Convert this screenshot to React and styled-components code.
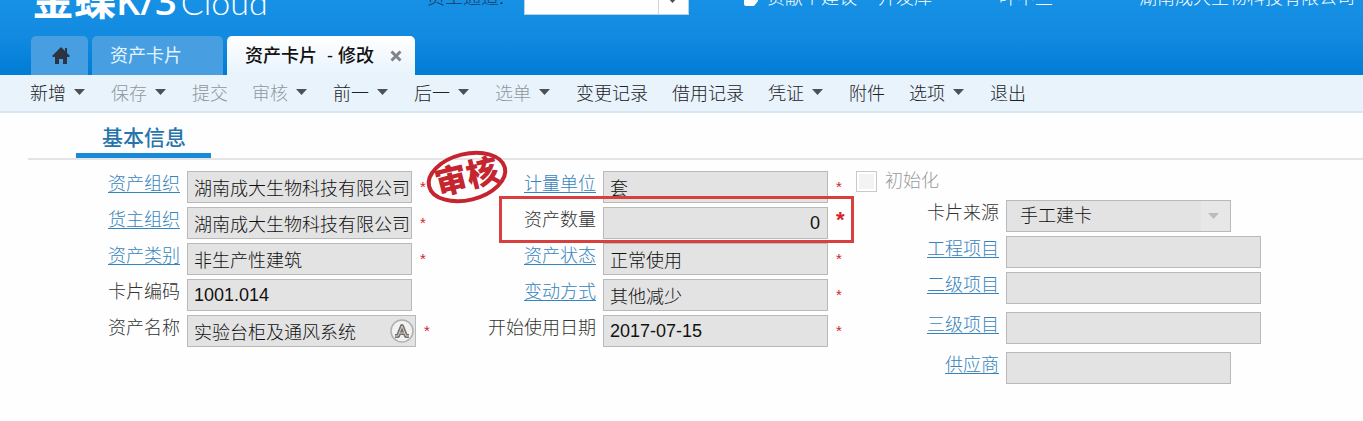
import React from 'react';
import styled, { createGlobalStyle, css } from 'styled-components';

const toolbarItems = [
    { text: '新增', menu: true },
    { text: '保存', menu: true, muted: true },
    { text: '提交', muted: true },
    { text: '审核', menu: true, muted: true },
    { text: '前一', menu: true },
    { text: '后一', menu: true },
    { text: '选单', menu: true, muted: true },
    { text: '变更记录' },
    { text: '借用记录' },
    { text: '凭证', menu: true },
    { text: '附件' },
    { text: '选项', menu: true },
    { text: '退出' },
];

const assetFields = [
    { id: 'assetOrg', label: '资产组织', value: '湖南成大生物科技有限公司', link: true, required: true },
    { id: 'ownerOrg', label: '货主组织', value: '湖南成大生物科技有限公司', link: true, required: true },
    { id: 'category', label: '资产类别', value: '非生产性建筑', link: true, required: true },
    { id: 'cardCode', label: '卡片编码', value: '1001.014' },
    { id: 'assetName', label: '资产名称', value: '实验台柜及通风系统', required: true, multilang: true },
];

const stateFields = [
    { id: 'unit', label: '计量单位', value: '套', link: true, required: true },
    { id: 'quantity', label: '资产数量', value: '0', required: true, marked: true },
    { id: 'status', label: '资产状态', value: '正常使用', link: true, required: true },
    { id: 'changeMode', label: '变动方式', value: '其他减少', link: true, required: true },
    { id: 'startDate', label: '开始使用日期', value: '2017-07-15', required: true },
];

const projectFields = [
    { id: 'project1', label: '工程项目', value: '', link: true, size: 'large' },
    { id: 'project2', label: '二级项目', value: '', link: true, size: 'large', loose: true },
    { id: 'project3', label: '三级项目', value: '', link: true, size: 'large', loose: true },
    { id: 'supplier', label: '供应商', value: '', link: true },
];

const Caret = ({ color = '#4c5157' }) => (
    <svg width="13" height="8" viewBox="0 0 13 8" aria-hidden="true">
        <path d="M0 1h11L5.500 7z" fill={color} />
    </svg>
);

const Field = ({ field, wide }) => (
    <FieldRow $marked={field.marked} $loose={field.loose}>
        <FieldLabel htmlFor={field.id} $wide={wide}>
            {field.link ? <FieldLink href={`#${field.id}`}>{field.label}</FieldLink> : field.label}
        </FieldLabel>
        <InputWrapper $size={field.multilang ? 'medium' : field.size}>
            <TextInput id={field.id} defaultValue={field.value} readOnly $number={field.marked} />
            {field.multilang &&
                <LangButton type="button" aria-label="多语言">
                    <svg width="24" height="24" viewBox="0 0 24 24">
                        <circle cx="12" cy="12" r="11" fill="#f1f1f1" stroke="#aeb0b2" strokeWidth="1.5" />
                        <path
                            d="M5 17h3L12 7l4 10h3M9 14h6"
                            fill="none" stroke="#77716d" strokeWidth="4" strokeLinejoin="round"
                        />
                        <path d="M5 17h3L12 7l4 10h3M9 14h6" fill="none" stroke="#d5d0cc" strokeWidth="1" />
                    </svg>
                </LangButton>
            }
        </InputWrapper>
        {field.required && <Required $marked={field.marked}>*</Required>}
    </FieldRow>
);

const App = () => (
    <Page>
        <GlobalStyle />
        <Header>
            <TopBar>
                <Logo>
                    <LogoName>金蝶</LogoName>
                    <LogoProduct>K/3</LogoProduct>
                    <LogoCloud>Cloud</LogoCloud>
                </Logo>
                <Channel>
                    <label htmlFor="channel">员工通道:</label>
                    <ChannelBox>
                        <ChannelSelect id="channel" />
                        <ChannelArrow><Caret /></ChannelArrow>
                    </ChannelBox>
                </Channel>
                <Account>
                    <svg width="18" height="18" viewBox="0 0 18 18" aria-hidden="true">
                        <path d="M2 0h14v9l-4 5H4q-2 0-2-2z" fill="#fff" />
                    </svg>
                    <AccountText $width={111}>贡献个建议</AccountText>
                    <AccountText $width={121}>开发库</AccountText>
                    <AccountText $width={140}>叶中兰</AccountText>
                    <AccountText>湖南成大生物科技有限公司</AccountText>
                </Account>
            </TopBar>
            <Tabs>
                <HomeTab type="button" aria-label="首页">
                    <svg width="18" height="17" viewBox="0 0 18 17">
                        <path d="M9 0L0 9l1 1h2v7h4v-5h4v5h4v-7h2l1-1-3-3V1h-2v3z" fill="#2b3440" />
                    </svg>
                </HomeTab>
                <Tab type="button">资产卡片</Tab>
                <ActiveTab>
                    <span>资产卡片&nbsp; - 修改</span>
                    <CloseButton type="button" aria-label="关闭">
                        <svg width="12" height="15" viewBox="0 0 12 15">
                            <path d="M1.500 4.500l9 9M10.500 4.500l-9 9" stroke="#7e8488" strokeWidth="3" />
                        </svg>
                    </CloseButton>
                </ActiveTab>
            </Tabs>
        </Header>
        <Toolbar>
            {toolbarItems.map(item => (
                <ToolButton key={item.text} type="button" $muted={item.muted}>
                    {item.text}
                    {item.menu && <Caret />}
                </ToolButton>
            ))}
        </Toolbar>
        <SectionBar>
            <SectionTitle>基本信息</SectionTitle>
        </SectionBar>
        <Form>
            <Column>
                {assetFields.map(field => <Field key={field.id} field={field} />)}
                <Stamp width="86" height="60" viewBox="0 0 86 60">
                    <g transform="rotate(-14 43 30)">
                        <ellipse cx="43" cy="30" rx="39" ry="23" fill="none" stroke="#c5252f" strokeWidth="4" />
                        <text x="43" y="41" textAnchor="middle">审核</text>
                    </g>
                </Stamp>
            </Column>
            <Column>
                {stateFields.map(field => <Field key={field.id} field={field} />)}
            </Column>
            <Column>
                <CheckLabel>
                    <CheckBox type="checkbox" disabled />
                    初始化
                </CheckLabel>
                <FieldRow>
                    <FieldLabel htmlFor="source" $wide>卡片来源</FieldLabel>
                    <InputWrapper>
                        <SourceSelect id="source" defaultValue="手工建卡">
                            <option>手工建卡</option>
                        </SourceSelect>
                        <SourceArrow><Caret color="#bcbcbc" /></SourceArrow>
                    </InputWrapper>
                </FieldRow>
                {projectFields.map(field => <Field key={field.id} field={field} wide />)}
            </Column>
        </Form>
    </Page>
);

export default App;

const GlobalStyle = createGlobalStyle`
    *, *::after {
        box-sizing: border-box;
    }

    body {
        margin: 0;
        background: #fefefe;
    }

    body, button, input, select {
        font-family: "Liberation Sans", "Noto Sans CJK SC", sans-serif;
        font-size: 18px;
        font-weight: 300;
    }

    button {
        border: 0;
        padding: 0;
        background: none;
        cursor: pointer;
    }

    svg {
        display: block;
        flex: none;
    }
`;

const Page = styled.div`
    color: #222;
    white-space: nowrap;
`;

const Header = styled.header`
    background: linear-gradient(#1791e5, #118ae0 50%, #007cd5);
`;

/* scrolled up: only the lower edge of this bar is on screen */
const TopBar = styled.div`
    display: flex;
    align-items: flex-end;
    height: 20px;
    padding-left: 32px;
    overflow: hidden;
`;

const Logo = styled.div`
    display: flex;
    align-items: baseline;
    width: 395px;
    color: #fff;
    line-height: 36px;
`;

const LogoName = styled.span`
    font-size: 42px;
    font-weight: 700;
`;

const LogoProduct = styled.span`
    font-family: "Open Sans", sans-serif;
    font-size: 38px;
    font-weight: 600;
`;

const LogoCloud = styled.span`
    margin-left: 4px;
    font-family: Lato, sans-serif;
    font-size: 34px;
    font-weight: 300;
`;

const Channel = styled.div`
    display: flex;
    align-items: flex-end;
    width: 315px;
    color: #173a5c;

    label {
        width: 97px;
        padding-bottom: 10px;
        line-height: 24px;
    }
`;

const ChannelBox = styled.div`
    position: relative;
    margin-bottom: 5px;
`;

const ChannelSelect = styled.select`
    display: block;
    width: 165px;
    height: 30px;
    border: 1px solid #b7d3e8;
    border-radius: 0;
    background: #fff;
    appearance: none;
`;

const ChannelArrow = styled.span`
    position: absolute;
    right: 1px;
    bottom: 1px;
    display: flex;
    align-items: center;
    justify-content: center;
    width: 30px;
    height: 28px;
    border-left: 1px solid #d5d5d5;
    pointer-events: none;
`;

const Account = styled.div`
    display: flex;
    align-items: flex-end;
    padding-bottom: 10px;
    color: #fff;
    line-height: 24px;

    svg {
        margin-right: 7px;
    }
`;

const AccountText = styled.span`
    flex: none;
    width: ${({ $width }) => ($width ? `${$width}px` : 'auto')};
`;

const Tabs = styled.nav`
    display: flex;
    gap: 4px;
    padding: 16px 31px 0;
`;

const tabBox = css`
    display: flex;
    align-items: center;
    height: 39px;
    border-radius: 5px 5px 0 0;
`;

const HomeTab = styled.button`
    ${tabBox}
    justify-content: center;
    width: 57px;
    padding-left: 3px;
    background: #479fe2;
`;

const Tab = styled.button`
    ${tabBox}
    width: 131px;
    padding: 0 0 3px 18px;
    background: #479fe2;
    color: #e4f4ff;
    font-weight: 400;
`;

const ActiveTab = styled.div`
    ${tabBox}
    justify-content: space-between;
    width: 188px;
    padding: 0 13px 3px 18px;
    background: linear-gradient(#fff, #e8f3fc);
    color: #111;
    font-weight: 500;
`;

const CloseButton = styled.button`
    display: flex;
`;

const Toolbar = styled.div`
    display: flex;
    align-items: center;
    gap: 24px;
    height: 38px;
    padding: 0 0 2px 30px;
    border-bottom: 2px solid #d8e6f1;
    background: #e8f3fc;
`;

const ToolButton = styled.button`
    display: flex;
    align-items: center;
    gap: 8px;
    color: ${({ $muted }) => ($muted ? '#8f979c' : '#1c2226')};
`;

const SectionBar = styled.div`
    display: flex;
    margin-left: 28px;
    padding-left: 48px;
    border-bottom: 2px solid #e2e4e6;
`;

const SectionTitle = styled.h2`
    width: 135px;
    margin: 0;
    padding: 9px 0 0 26px;
    border-bottom: 5px solid #188ad8;
    color: #2674ac;
    font-size: 21px;
    font-weight: 500;
    line-height: 31px;
`;

const Form = styled.form`
    display: grid;
    grid-template-columns: 416fr 372fr 507fr;
    padding: 11px 0 38px 68px;
`;

const Column = styled.div`
    position: relative;
    min-width: 0;
`;

const FieldRow = styled.div`
    position: relative;
    display: flex;
    align-items: flex-start;
    margin-bottom: ${({ $loose }) => ($loose ? 8 : 4)}px;

    ${({ $marked }) => $marked && css`
        z-index: 1;

        &::after {
            content: '';
            position: absolute;
            top: -11px;
            left: 15px;
            width: 355px;
            height: 47px;
            border: 3px solid #d8403f;
            pointer-events: none;
        }
    `}
`;

const FieldLabel = styled.label`
    flex: none;
    width: ${({ $wide }) => ($wide ? 143 : 112)}px;
    margin-right: 7px;
    color: #333;
    line-height: 26px;
    text-align: right;
`;

const FieldLink = styled.a`
    color: #3584bd;
    text-decoration: underline;
    text-decoration-thickness: 1px;
    text-underline-offset: 2px;
`;

const inputWidths = { medium: 229, large: 255 };

const InputWrapper = styled.div`
    position: relative;
    flex: none;
    width: ${({ $size }) => inputWidths[$size] || 225}px;
`;

const inputBox = css`
    display: block;
    width: 100%;
    height: 32px;
    margin: 0;
    border: 1px solid #b9b9b9;
    border-radius: 0;
    background: #e3e3e3;
    color: #111;
    outline: none;
`;

const TextInput = styled.input`
    ${inputBox}
    padding: 0 0 0 6px;

    ${({ $number }) => $number && css`
        padding-right: 7px;
        text-align: right;
    `}
`;

const LangButton = styled.button`
    position: absolute;
    top: 4px;
    right: 2px;
`;

const Required = styled.span`
    margin-left: 8px;
    color: #d5232b;
    font-size: ${({ $marked }) => ($marked ? 22 : 15)}px;
    font-weight: ${({ $marked }) => ($marked ? 700 : 400)};
    line-height: ${({ $marked }) => ($marked ? 26 : 32)}px;
`;

const SourceSelect = styled.select`
    ${inputBox}
    padding: 0 0 0 13px;
    appearance: none;
`;

const SourceArrow = styled.span`
    position: absolute;
    top: 1px;
    right: 1px;
    display: flex;
    align-items: center;
    padding: 0 9px 0 7px;
    height: 30px;
    background: #e7e7e7;
    pointer-events: none;
`;

const CheckLabel = styled.label`
    display: flex;
    align-items: flex-start;
    gap: 8px;
    height: 21px;
    margin-bottom: 8px;
    color: #999;
    line-height: 20px;
`;

const CheckBox = styled.input`
    width: 21px;
    height: 21px;
    margin: 0;
    border: 1px solid #c9c9c9;
    background: #f3f3f3;
    box-shadow: inset 0 0 0 2px #fff;
    appearance: none;
`;

const Stamp = styled.svg`
    position: absolute;
    top: -24px;
    left: 356px;

    text {
        fill: #c5252f;
        font-size: 32px;
        font-weight: 900;
    }
`;
